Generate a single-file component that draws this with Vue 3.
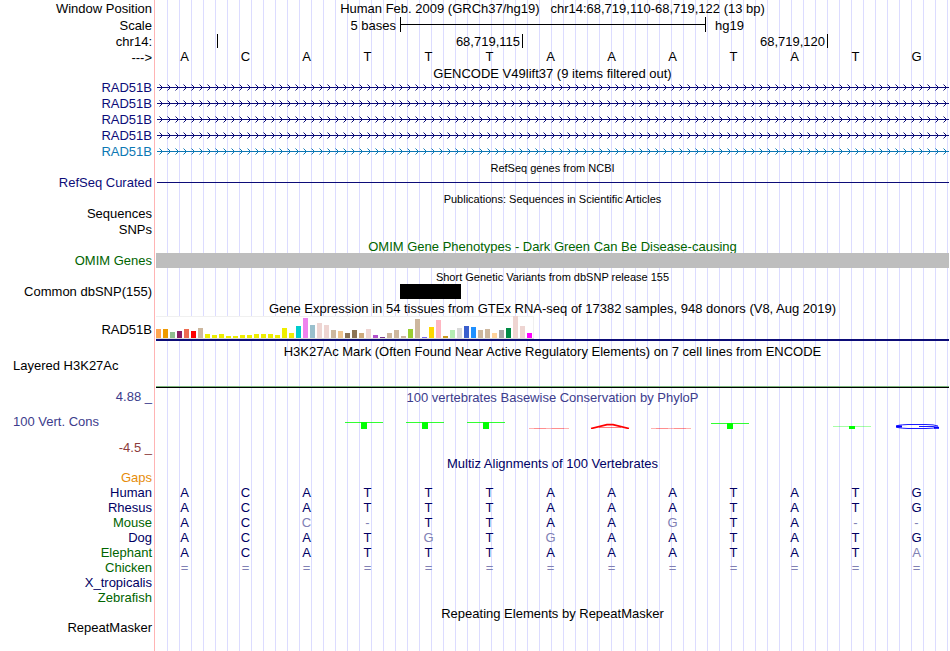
<template>
  <main class="browser">
    <header>
      <div class="row row-17">
        <span class="label">Window Position</span>
        <div class="track title">{{ assembly }}{{ '\u00a0\u00a0 ' }}{{ position }}</div>
      </div>
      <div class="row row-17">
        <span class="label">Scale</span>
        <div class="track bases">
          <span class="scale-size">5 bases</span>
          <span class="scale-bar"></span>
          <span class="scale-db">hg19</span>
        </div>
      </div>
      <div class="row row-16">
        <span class="label">chr14:</span>
        <div class="track bases">
          <span class="tick tick-first">68,719,115</span>
          <span class="tick">68,719,120</span>
          <span class="tick tick-last"></span>
        </div>
      </div>
      <div class="row row-16">
        <span class="label">---&gt;</span>
        <div class="track bases">
          <span v-for="(base, i) in sequence" :key="i" class="base">{{ base }}</span>
        </div>
      </div>
    </header>

    <section>
      <h2 class="title heading row-14">GENCODE V49lift37 (9 items filtered out)</h2>
      <div v-for="(gene, i) in genes" :key="i" :class="['row', 'row-16', gene]">
        <span class="label">RAD51B</span>
        <svg class="track intron" width="100%" height="16" aria-hidden="true">
          <defs>
            <pattern :id="'arrows-' + i" width="8" height="16" patternUnits="userSpaceOnUse">
              <path d="M3.5 4.5l3 3-3 3" fill="none" stroke="currentColor" />
            </pattern>
          </defs>
          <rect x="1" y="7" width="100%" height="1" fill="currentColor" />
          <rect x="1" width="100%" height="16" :fill="`url(#arrows-${i})`" />
        </svg>
      </div>
    </section>

    <section>
      <h2 class="title heading small row-15">RefSeq genes from NCBI</h2>
      <div class="row row-16 navy">
        <span class="label">RefSeq Curated</span>
        <div class="track"><div class="refseq-line"></div></div>
      </div>
    </section>

    <section>
      <h2 class="title heading small row-15">Publications: Sequences in Scientific Articles</h2>
      <div class="row row-16"><span class="label">Sequences</span></div>
      <div class="row row-16"><span class="label">SNPs</span></div>
    </section>

    <section>
      <h2 class="title heading green row-15">OMIM Gene Phenotypes - Dark Green Can Be Disease-causing</h2>
      <div class="row row-15">
        <span class="label green">OMIM Genes</span>
        <div class="track omim-bar"></div>
      </div>
    </section>

    <section>
      <h2 class="title heading small row-16">Short Genetic Variants from dbSNP release 155</h2>
      <div class="row row-15">
        <span class="label">Common dbSNP(155)</span>
        <div class="track bases"><span class="snp"></span></div>
      </div>
    </section>

    <section>
      <h2 class="title heading row-17">Gene Expression in 54 tissues from GTEx RNA-seq of 17382 samples, 948 donors (V8, Aug 2019)</h2>
      <div class="row gtex">
        <span class="label">RAD51B</span>
        <div class="track gtex-track">
          <div class="gtex-chart">
            <i
              v-for="(tissue, i) in tissues"
              :key="i"
              class="gtex-bar"
              :style="{ height: tissue[0] + 'px', background: tissue[1] }"
            ></i>
          </div>
        </div>
      </div>
    </section>

    <section>
      <h2 class="title heading row-19">H3K27Ac Mark (Often Found Near Active Regulatory Elements) on 7 cell lines from ENCODE</h2>
      <div class="row layered">
        <span class="label label-left">Layered H3K27Ac</span>
        <div class="track layered-track"></div>
      </div>
    </section>

    <section class="row phylop">
      <div class="phylop-labels">
        <span class="label indigo">4.88 _</span>
        <span class="label label-left indigo">100 Vert. Cons</span>
        <span class="label maroon">-4.5 _</span>
      </div>
      <div class="track">
        <h2 class="title indigo row-17">100 vertebrates Basewise Conservation by PhyloP</h2>
        <div class="bases logo">
          <svg v-for="(shape, i) in logo" :key="i" width="61" height="8" viewBox="0 0 61 8" aria-hidden="true">
            <g v-if="shape === 'high'" fill="#0f0">
              <rect x="6" y="1" width="38" height="1" opacity=".8" />
              <rect x="22" y="1" width="6" height="7" />
            </g>
            <g v-else-if="shape === 'mid'" fill="#0f0">
              <rect x="6" y="2" width="38" height="1" opacity=".8" />
              <rect x="22" y="2" width="6" height="6" />
            </g>
            <g v-else-if="shape === 'low'" fill="#0f0">
              <rect x="6" y="5" width="38" height="1" opacity=".35" />
              <rect x="22" y="5" width="6" height="3" />
            </g>
            <g v-else-if="shape === 'flat'" fill="#f00">
              <rect x="7" y="7" width="40" height="1" opacity=".3" />
              <rect x="12" y="7" width="12" height="1" opacity=".2" />
              <rect x="30" y="7" width="12" height="1" opacity=".2" />
            </g>
            <g v-else-if="shape === 'peak'" fill="none" stroke="#f00">
              <path d="M8 7.5L24 3.6h6L46 7.5" stroke-width="1.8" />
              <path d="M16 6.5h22" stroke-width=".5" />
            </g>
            <g v-else-if="shape === 'ring'" fill="none" stroke="#00f">
              <path d="M50 5Q46 3.5 38 3.5H20Q8 4 8 5.5T20 7.5H38Q46 7.5 50 6" stroke-width=".9" />
              <path d="M8 5.5h6" stroke-width="2" />
              <path d="M31 5.5h14l5 1" stroke-width=".9" />
              <path d="M46 6.8h5" stroke-width="2" />
            </g>
          </svg>
        </div>
      </div>
    </section>

    <section>
      <h2 class="title heading ink row-14">Multiz Alignments of 100 Vertebrates</h2>
      <table class="alignment">
        <tbody>
          <tr v-for="s in species" :key="s.name">
            <th scope="row" :class="s.color">{{ s.name }}</th>
            <td v-for="(base, i) in s.bases.padEnd(13)" :key="i" :class="{ mismatch: base !== sequence[i] }">{{ base }}</td>
          </tr>
        </tbody>
      </table>
    </section>

    <section>
      <h2 class="title heading row-16">Repeating Elements by RepeatMasker</h2>
      <div class="row row-14"><span class="label">RepeatMasker</span></div>
    </section>
  </main>
</template>

<script setup>
const assembly = 'Human Feb. 2009 (GRCh37/hg19)'
const position = 'chr14:68,719,110-68,719,122 (13 bp)'

const sequence = 'ACATTTAAATATG'

const genes = ['navy', 'navy', 'navy', 'navy', 'blue']

// [bar height, tissue color]
const tissues = [
  [9, '#ffa54f'], [9, '#ee9a00'], [6, '#8fbc8f'], [7, '#8b1c62'], [9, '#ee6a50'], [7, '#ff0000'],
  [10, '#cdb79e'], [4, '#eeee00'], [3, '#eeee00'], [4, '#eeee00'], [2, '#eeee00'], [2, '#eeee00'],
  [3, '#eeee00'], [3, '#eeee00'], [4, '#eeee00'], [4, '#eeee00'], [4, '#eeee00'], [3, '#eeee00'],
  [10, '#eeee00'], [5, '#eeee00'], [12, '#00cdcd'], [20, '#ee82ee'], [13, '#9ac0cd'], [15, '#eed5d2'],
  [13, '#eed5d2'], [8, '#cdb79e'], [7, '#eec591'], [5, '#8b7355'], [8, '#8b7355'], [5, '#cdaa7d'],
  [9, '#eed5d2'], [3, '#b452cd'], [1, '#7a378b'], [5, '#cdb79e'], [8, '#cdb79e'], [2, '#cdb79e'],
  [9, '#9acd32'], [19, '#cdb79e'], [1, '#7a67ee'], [11, '#ffd700'], [18, '#ffb6c1'], [2, '#cd9b1d'],
  [8, '#b4eeb4'], [10, '#d9d9d9'], [12, '#3a5fcd'], [11, '#1e90ff'], [8, '#cdb79e'], [9, '#cdb79e'],
  [5, '#ffd39b'], [8, '#a6a6a6'], [10, '#008b45'], [22, '#eed5d2'], [12, '#eed5d2'], [5, '#ff00ff']
]

const logo = ['', '', '', 'high', 'high', 'high', 'flat', 'peak', 'flat', 'mid', '', 'low', 'ring']

const species = [
  { name: 'Gaps', color: 'orange', bases: '' },
  { name: 'Human', color: 'ink', bases: 'ACATTTAAATATG' },
  { name: 'Rhesus', color: 'ink', bases: 'ACATTTAAATATG' },
  { name: 'Mouse', color: 'green', bases: 'ACC-TTAAGTA--' },
  { name: 'Dog', color: 'ink', bases: 'ACATGTGAATATG' },
  { name: 'Elephant', color: 'green', bases: 'ACATTTAAATATA' },
  { name: 'Chicken', color: 'green', bases: '=============' },
  { name: 'X_tropicalis', color: 'ink', bases: '' },
  { name: 'Zebrafish', color: 'green', bases: '' }
]
</script>

<style>
body {
  margin: 0;
  background: #fff;
}
</style>

<style scoped>
.browser {
  box-sizing: border-box;
  min-height: 100vh;
  padding-right: 1px;
  overflow: hidden;
  font-family: "Liberation Sans", Arial, sans-serif;
  font-size: 13px;
  line-height: 16px;
  color: #000;
  background:
    linear-gradient(#ffb4b4, #ffb4b4) 154px 0 / 1px 100% no-repeat,
    repeating-linear-gradient(to right, transparent 0 11px, #dcdcff 11px 12px) 156px 0 no-repeat;
}

.row {
  display: grid;
  grid-template-columns: 152px minmax(0, 1fr);
  column-gap: 4px;
}

.row-14 { height: 14px; line-height: 14px; }
.row-15 { height: 15px; line-height: 15px; }
.row-16 { height: 16px; line-height: 16px; }
.row-17 { height: 17px; line-height: 17px; }
.row-19 { height: 19px; line-height: 19px; }

.label {
  text-align: right;
  white-space: nowrap;
}

.label-left {
  padding-left: 13px;
  text-align: left;
}

.title {
  margin: 0;
  font-size: 13px;
  font-weight: 400;
  text-align: center;
  white-space: nowrap;
}

.heading {
  box-sizing: border-box;
  margin-left: 156px;
  padding-top: 1px;
}

.small {
  font-size: 11px;
}

.bases {
  display: grid;
  grid-template-columns: repeat(13, minmax(0, 1fr));
}

.base {
  padding-right: 4px;
  text-align: center;
  line-height: 14px;
}

/* scale and ruler */
.scale-size {
  grid-column: 1 / 5;
  padding-right: 4px;
  text-align: right;
}

.scale-bar {
  grid-column: 5 / 10;
  height: 15px;
  border-left: 1px solid #000;
  background: linear-gradient(#000, #000) 0 7px / 100% 1px no-repeat;
}

.scale-db {
  grid-column: 10 / 14;
  height: 15px;
  padding-left: 9px;
  border-left: 1px solid #000;
}

.tick {
  grid-column: span 5;
  height: 14px;
  padding-right: 2px;
  border-left: 1px solid #000;
  text-align: right;
}

.tick-first {
  grid-column: 2 / 7;
}

.tick-last {
  grid-column: 12 / 14;
}

/* tracks */
.intron {
  display: block;
}

.refseq-line {
  margin: 7px 0 0 1px;
  border-top: 1px solid #0c0c78;
}

.omim-bar {
  background: #bebebe;
}

.snp {
  grid-column: 5;
  background: #000;
}

.gtex {
  height: 25px;
  line-height: 27px;
}

.gtex-track {
  height: 23px;
  border-bottom: 2px solid #0c0c78;
}

.gtex-chart {
  display: flex;
  align-items: flex-end;
  gap: 2px;
  box-sizing: border-box;
  width: 378px;
  height: 23px;
  background: #fff;
  border-bottom: 1px solid #d9d9d9;
  box-shadow: inset -1px 1px #f0f0f0;
}

.gtex-bar {
  flex: none;
  width: 5px;
}

.layered {
  height: 28px;
  line-height: 12px;
}

.layered-track {
  border-bottom: 1px solid #000;
  box-shadow: inset 0 -1px #78b478;
}

.phylop {
  box-sizing: border-box;
  height: 68px;
  padding-top: 1px;
}

.phylop-labels {
  display: grid;
  grid-template-rows: 25px 26px 16px;
}

.logo {
  padding-top: 15px;
}

/* alignment */
.alignment {
  width: 100%;
  table-layout: fixed;
  border-collapse: collapse;
  line-height: 15px;
}

.alignment th {
  width: 152px;
  height: 15px;
  padding: 0 4px 0 0;
  font-weight: 400;
  text-align: right;
}

.alignment td {
  padding: 0 4px 0 0;
  color: #000064;
  text-align: center;
}

.alignment .mismatch {
  color: #8080b4;
}

.navy { color: #0c0c78; }
.ink { color: #000064; }
.blue { color: #0c78b4; }
.green { color: #006400; }
.indigo { color: #3c3c8c; }
.maroon { color: #8c3c3c; }
.orange { color: #e68c0a; }
</style>
